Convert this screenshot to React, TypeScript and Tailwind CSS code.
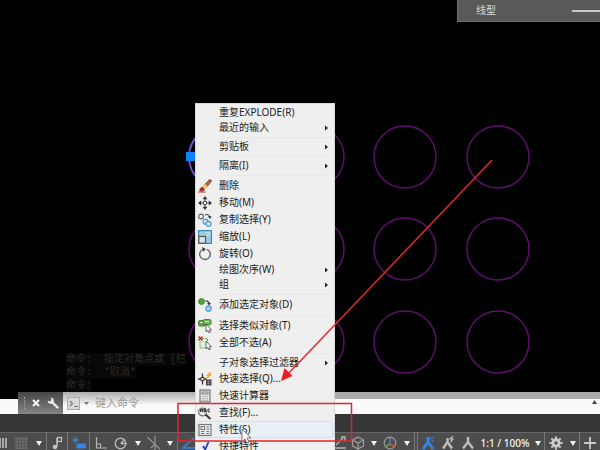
import type { ReactNode } from "react";

type Item = {
  label: string;
  icon?: ReactNode;
  submenu?: boolean;
  checked?: boolean;
  active?: boolean;
};

const columns = [220, 313, 405, 498];
const rows = [157, 249, 342];

function EraseIcon() {
  return (
    <svg viewBox="0 0 14 14" className="size-3.5">
      <path d="M0 13h8" stroke="#c0392b" strokeWidth="1" />
      <path d="M6 6 11 1q1-1 2 0t0 2L8.500 8.500z" fill="#a8683c" stroke="#5a3a26" strokeWidth=".6" />
      <path d="M4 7.500 7 4.700 10 7.700 7 10.500z" fill="#f0c070" />
      <path d="M1.500 10 4 7.500 7 10.500 5 12.500H2.500Q.8 11.500 1.500 10z" fill="#9a3328" />
    </svg>
  );
}

function MoveIcon() {
  return (
    <svg viewBox="0 0 14 14" className="size-3.5" fill="#333">
      <path d="M7 2v10M2 7h10" stroke="#555" strokeWidth="1.100" />
      <path d="M7 0 9.400 3.200H4.600zM7 14 4.600 10.800h4.800zM0 7l3.200-2.400v4.800zM14 7l-3.200 2.400V4.600z" />
      <rect x="5.500" y="5.500" width="3" height="3" fill="#efefef" stroke="#444" strokeWidth=".8" />
    </svg>
  );
}

function CopyIcon() {
  return (
    <svg viewBox="0 0 14 14" className="size-3.5" fill="none">
      <circle cx="3" cy="3.500" r="2.400" stroke="#666" strokeWidth="1.200" />
      <path d="M7 2q4-1.500 5 2" stroke="#333" strokeWidth="1" />
      <path d="M9.800 3.200h3.700L12 6z" fill="#333" />
      <circle cx="7.500" cy="8.700" r="2.500" fill="#cfe6f7" stroke="#4a9bd6" strokeWidth="1.200" />
      <circle cx="10.500" cy="10.800" r="2.500" fill="#cfe6f7" stroke="#4a9bd6" strokeWidth="1.200" />
    </svg>
  );
}

function ScaleIcon() {
  return (
    <svg viewBox="0 0 14 14" className="size-3.5">
      <rect x=".6" y=".6" width="12.800" height="12.800" fill="#9acdea" stroke="#4688b4" strokeWidth="1.200" />
      <path d="M8 2.500h3.500V6M11.500 2.500 8 6" fill="none" stroke="#c4e3f5" strokeWidth="1" />
      <rect x=".8" y="6.500" width="6.700" height="6.700" fill="#e4e4e4" stroke="#555" strokeWidth="1.200" />
    </svg>
  );
}

function RotateIcon() {
  return (
    <svg viewBox="0 0 14 14" className="size-3.5" fill="none" stroke="#666" strokeWidth="1.400">
      <path d="M9 2.300A5.300 5.300 0 1 1 4.500 2.500" />
      <path d="M4 0 8 2 5 5z" fill="#444" stroke="none" />
    </svg>
  );
}

function AddSelectedIcon() {
  return (
    <svg viewBox="0 0 14 14" className="size-3.5">
      <circle cx="3.500" cy="3.500" r="3" fill="#55a53a" stroke="#3b7d28" strokeWidth=".8" />
      <path d="M7.500 2.800q3.500 0 3.500 3" fill="none" stroke="#333" strokeWidth="1.200" />
      <path d="M9 5h4l-2 2.600z" fill="#333" />
      <circle cx="10.500" cy="10.600" r="2.700" fill="#a9d2f1" stroke="#4a9bd6" strokeWidth="1.200" />
    </svg>
  );
}

function Pointer() {
  return <path d="M8 5v8l1.800-1.600 1.200 2.600 1.300-.6-1.200-2.500H13.500z" fill="#fff" stroke="#444" strokeWidth=".8" />;
}

function SelectSimilarIcon() {
  return (
    <svg viewBox="0 0 14 14" className="size-3.5">
      <rect x=".5" y="1.500" width="7" height="5.500" rx="1.500" fill="#5faa45" stroke="#3b7d28" strokeWidth=".9" />
      <rect x="5" y=".5" width="8" height="5.500" rx="1.500" fill="#6cb552" stroke="#3b7d28" strokeWidth=".9" />
      <path d="M2 3.500h3M7 2.500h4" stroke="#d3efc6" strokeWidth="1" />
      <Pointer />
    </svg>
  );
}

function DeselectIcon() {
  return (
    <svg viewBox="0 0 14 14" className="size-3.5">
      <path d="M4 2.500h5.500V12H2V5" fill="#dff2d8" stroke="#5faa45" strokeWidth="1" strokeDasharray="2 1" />
      <path d="m.5.500 4 4m0-4-4 4" stroke="#d8262c" strokeWidth="1.500" />
      <Pointer />
    </svg>
  );
}

function QuickSelectIcon() {
  return (
    <svg viewBox="0 0 14 14" className="size-3.5">
      <path d="M4.500 1.500v4M4.500 8.500v4M0 7h3M6 7h3" stroke="#333" strokeWidth="1.300" />
      <rect x="3" y="5.500" width="3" height="3" fill="none" stroke="#333" strokeWidth=".9" />
      <path d="m12.500 0-4 3.500h2L8 7l5.500-4.500h-2z" fill="#efa53c" stroke="#efa53c" strokeWidth=".8" />
      <rect x="8" y="7.500" width="5.500" height="6" fill="#444" />
      <path d="M9 9.500h3.500M9 11.500h3.500M10.700 8v5" stroke="#aaa" strokeWidth=".5" />
    </svg>
  );
}

function CalculatorIcon() {
  return (
    <svg viewBox="0 0 14 14" className="size-3.5" fill="none" stroke="#777">
      <rect x="2" y="1" width="10" height="12" strokeWidth="1.200" fill="#e3e6e9" />
      <rect x="4" y="3" width="6" height="2" strokeWidth=".9" />
      <path d="M4 7.500h6M4 9.500h6M4 11.300h6" strokeWidth=".9" strokeDasharray="1.400 .9" stroke="#999" />
    </svg>
  );
}

function FindIcon() {
  return (
    <svg viewBox="0 0 14 14" className="size-3.5">
      <circle cx="4.500" cy="6" r="3.900" fill="#e6e9ec" stroke="#777" strokeWidth="1.200" />
      <path d="m7.500 8.500 5 4.500" stroke="#333" strokeWidth="2" />
      <path d="M2.500 6V3.500h2V6m-2-1.200h2M6 2.800v3h1.800v-3zm0 1.500h1.800M12 3.200h-2v2.600h2" fill="none" stroke="#333" strokeWidth="1" />
    </svg>
  );
}

function PropertiesIcon() {
  return (
    <svg viewBox="0 0 14 14" className="size-3.5" fill="none" stroke="#777">
      <rect x="1" y="1.500" width="12" height="11" strokeWidth="1.200" fill="#e9eaec" />
      <rect x="3" y="3.500" width="3.500" height="3" strokeWidth="1" />
      <path d="M8.500 4H11M8.500 6.200H11M3 8.500h3.500M3 10.500h3.500M8.500 8.500H11M8.500 10.500H11" strokeWidth="1" />
    </svg>
  );
}

function CheckIcon() {
  return (
    <svg viewBox="0 0 14 14" className="size-3.5">
      <path d="m5 6 2.200 3.500L10.500 2" fill="none" stroke="#2a3cb0" strokeWidth="1.800" />
    </svg>
  );
}

const menu: Item[][] = [
  [{ label: "重复EXPLODE(R)" }, { label: "最近的输入", submenu: true }],
  [{ label: "剪贴板", submenu: true }],
  [{ label: "隔离(I)", submenu: true }],
  [
    { label: "删除", icon: <EraseIcon /> },
    { label: "移动(M)", icon: <MoveIcon /> },
    { label: "复制选择(Y)", icon: <CopyIcon /> },
    { label: "缩放(L)", icon: <ScaleIcon /> },
    { label: "旋转(O)", icon: <RotateIcon /> },
    { label: "绘图次序(W)", submenu: true },
    { label: "组", submenu: true },
  ],
  [{ label: "添加选定对象(D)", icon: <AddSelectedIcon /> }],
  [
    { label: "选择类似对象(T)", icon: <SelectSimilarIcon /> },
    { label: "全部不选(A)", icon: <DeselectIcon /> },
  ],
  [
    { label: "子对象选择过滤器", submenu: true },
    { label: "快速选择(Q)...", icon: <QuickSelectIcon /> },
    { label: "快速计算器", icon: <CalculatorIcon /> },
    { label: "查找(F)...", icon: <FindIcon /> },
    { label: "特性(S)", icon: <PropertiesIcon />, active: true },
    { label: "快捷特性", icon: <CheckIcon />, checked: true },
  ],
];

function MenuItem({ item }: { item: Item }) {
  return (
    <button
      role={item.checked ? "menuitemcheckbox" : "menuitem"}
      aria-checked={item.checked}
      className={`flex w-full items-center pl-px pr-1 text-left ${item.icon ? "h-[17px]" : "h-[15px]"} ${
        item.active ? "rounded-sm bg-[#e9f0f7] ring-1 ring-inset ring-[#d0deed]" : ""
      }`}
    >
      <span className="w-[21px] shrink-0">{item.icon}</span>
      <span className="flex-1 whitespace-nowrap">{item.label}</span>
      {item.submenu && (
        <svg viewBox="0 0 4 6" className="h-1.5 w-1">
          <path d="M0 .5 3 3 0 5.500z" fill="#222" />
        </svg>
      )}
    </button>
  );
}

function ContextMenu() {
  return (
    <div
      role="menu"
      className="absolute left-[195px] top-[103px] w-[140px] border border-[#d8d8d8] bg-[#efefef] p-px text-[10px] text-[#222]"
    >
      {menu.map((group, i) => (
        <div key={i}>
          {i > 0 && (
            <div className="flex h-1 items-center pl-6">
              <div className="h-px w-full bg-[#e8e8e8]" />
            </div>
          )}
          {group.map((item) => (
            <MenuItem key={item.label} item={item} />
          ))}
        </div>
      ))}
    </div>
  );
}

function Drawing() {
  return (
    <svg className="absolute inset-0 h-full w-full" fill="none">
      {rows.map((cy) =>
        columns.map((cx) => {
          const selected = cx === 220 && cy === 157;
          return (
            <circle key={`${cx}-${cy}`} cx={cx} cy={cy} r="31" stroke={selected ? "#6a50c8" : "#5e0f6b"} strokeWidth={selected ? 2 : 1.5} />
          );
        })
      )}
      <rect x="186" y="152" width="9" height="9" fill="#0a84ff" />
    </svg>
  );
}

function Tool({ label, width, children }: { label: string; width: string; children: ReactNode }) {
  return (
    <button aria-label={label} className={`flex h-3.5 shrink-0 items-center justify-center ${width}`}>
      {children}
    </button>
  );
}

function Caret() {
  return (
    <svg viewBox="0 0 6 5" className="h-[5px] w-1.5">
      <path d="M0 0h6L3 5z" fill="#eee" />
    </svg>
  );
}

function Glyph({ children, color = "#b5b5b5" }: { children: ReactNode; color?: string }) {
  return (
    <svg viewBox="0 0 14 14" className="size-3.5 shrink-0" fill="none" stroke={color} strokeWidth="1.200">
      {children}
    </svg>
  );
}

function Rule() {
  return <div className="-mt-1 h-[18px] w-px shrink-0 bg-[#777]" />;
}

function StatusBar() {
  return (
    <div className="flex h-[18px] shrink-0 items-start border-t border-[#666] bg-[#4d4d4d] pt-[3px]">
      <Tool label="模型" width="w-3">
        <Glyph>
          <path d="M1 2v10M4 2v10M7 2v10" strokeWidth="1.800" />
        </Glyph>
      </Tool>
      <Tool label="栅格" width="w-5">
        <Glyph color="#858585">
          <path d="M2 1v12M5 1v12M8 1v12M11 1v12M0 3h13M0 6h13M0 9h13M0 12h13" strokeWidth=".9" strokeDasharray="1.500 .7" />
        </Glyph>
      </Tool>
      <Tool label="捕捉设置" width="w-3.5">
        <Caret />
      </Tool>
      <Rule />
      <Tool label="推断约束" width="w-5">
        <Glyph color="#c4c4c4">
          <path d="M7 11V2" strokeWidth="1.500" />
          <circle cx="5" cy="11" r="1.600" fill="#c4c4c4" />
          <rect x="7.500" y="1.500" width="4" height="4" />
        </Glyph>
      </Tool>
      <Rule />
      <Tool label="动态输入" width="w-[21px]">
        <Glyph color="#3188e8">
          <path d="M3.500 1v6M.5 4h6" strokeWidth="1.600" />
          <rect x="5" y="8" width="8.500" height="4" rx="1" fill="#3188e8" />
        </Glyph>
      </Tool>
      <Rule />
      <Tool label="正交" width="w-[21px]">
        <Glyph>
          <path d="M2.500 1v11H13M2.500 8h4v4" />
        </Glyph>
      </Tool>
      <Tool label="极轴" width="w-5">
        <Glyph>
          <circle cx="6.500" cy="7.500" r="5.200" strokeWidth="1.500" />
          <path d="M6.500 7.500H13M6.500 7.500l4.500-4M8.500 6v3" />
        </Glyph>
      </Tool>
      <Tool label="极轴设置" width="w-3.5">
        <Caret />
      </Tool>
      <Tool label="等轴测草图" width="w-[18px]">
        <Glyph color="#959595">
          <path d="m0 1 13 12M8 0v14M8 8l-4 4" />
        </Glyph>
      </Tool>
      <Tool label="草图设置" width="w-3.5">
        <Caret />
      </Tool>
      <Rule />
      <Tool label="对象捕捉追踪" width="w-5">
        <Glyph color="#3188e8">
          <path d="M13 2 2 12h12" strokeWidth="1.500" />
        </Glyph>
      </Tool>

      <div className="ml-auto flex items-start">
        <Tool label="选择循环" width="w-4">
          <Glyph>
            <path d="M1 12h12M3 9l7-7M8 1h4v4" strokeWidth="1.400" />
          </Glyph>
        </Tool>
        <Tool label="三维对象捕捉" width="w-5">
          <Glyph color="#a0a0a0">
            <path d="m7 1 5.500 3v6L7 13l-5.500-3V4zM1.500 4 7 7l5.500-3M7 7v6" />
          </Glyph>
        </Tool>
        <Tool label="三维捕捉设置" width="w-3">
          <Caret />
        </Tool>
        <Tool label="动态 UCS" width="w-5">
          <Glyph color="#999">
            <circle cx="7" cy="7" r="5.800" />
            <path d="M7 8V2" stroke="#4b9be0" />
            <path d="m7 8 5 3" stroke="#d05545" strokeWidth="1.500" />
            <path d="m7 8-5 3" stroke="#5ba84a" strokeWidth="1.500" />
          </Glyph>
        </Tool>
        <Tool label="UCS 设置" width="w-3.5">
          <Caret />
        </Tool>
        <div className="flex gap-0.5">
          <Rule />
          <Rule />
        </div>
        <Tool label="注释可见性" width="w-5">
          <Glyph color="#2f86ea">
            <path d="M7 1v6M7 6l-5 7M7 6l5 7" strokeWidth="3" />
            <path d="m9 3 4-2M10 5h3" />
          </Glyph>
        </Tool>
        <Tool label="自动缩放" width="w-5">
          <Glyph color="#bdbdbd">
            <path d="M6.500 2v5M6.500 6 2 12.500M6.500 6l4.500 6.500" strokeWidth="2.400" />
            <path d="m12 0-3 3h3L9.500 6" />
          </Glyph>
        </Tool>
        <Tool label="注释比例" width="w-5">
          <Glyph color="#bdbdbd">
            <path d="M7 1v6M7 6l-5 6.500M7 6l5 6.500" strokeWidth="2.400" />
          </Glyph>
        </Tool>
        <button className="flex h-3.5 w-[66px] items-center justify-center gap-1.5 whitespace-nowrap text-[10px] font-medium text-[#f4f4f4]">
          1:1 / 100%
          <Caret />
        </button>
        <Rule />
        <Tool label="切换工作空间" width="w-[22px]">
          <Glyph color="#cfcfcf">
            <circle cx="7" cy="7" r="3.200" strokeWidth="3" />
            <path d="M7 .5v2M7 11.500v2M.5 7h2M11.500 7h2M2.400 2.400l1.400 1.400M10.200 10.200l1.400 1.400M2.400 11.600l1.400-1.400M10.200 3.800l1.400-1.400" strokeWidth="2" />
          </Glyph>
        </Tool>
        <Tool label="工作空间设置" width="w-3">
          <Caret />
        </Tool>
        <Rule />
        <Tool label="注释监视器" width="w-5">
          <Glyph color="#c9c9c9">
            <path d="M7 1v12M1 7h12" strokeWidth="1.800" />
          </Glyph>
        </Tool>
      </div>
    </div>
  );
}

function CommandLine() {
  return (
    <div className="flex h-[22px] shrink-0 flex-col bg-gradient-to-b from-[#acacac] from-[32%] to-[#fafafa] to-[32%]">
      <div className="flex h-full items-stretch">
        {/* canvas shows through left of the grip */}
        <div className="w-[18px] bg-gradient-to-b from-black from-[32%] to-[#fafafa] to-[32%]" />
        <div className="flex w-[45px] items-center justify-between bg-gradient-to-b from-[#474747] to-[#858585] pl-1.5 pr-1">
          <div className="h-3 border-l border-dotted border-[#aaa]" />
          <button aria-label="关闭">
            <svg viewBox="0 0 8 8" className="size-2">
              <path d="m1 1 6 6m0-6L1 7" stroke="#fff" strokeWidth="1.800" />
            </svg>
          </button>
          <button aria-label="自定义">
            <svg viewBox="0 0 12 12" className="size-3">
              <path d="m4.500 4.500 6 6" stroke="#eee" strokeWidth="2.400" strokeLinecap="round" />
              <path d="M3.500.800A3 3 0 1 1 .8 3.500L3 4.800 4.800 3z" fill="#eee" />
            </svg>
          </button>
        </div>
        <label className="flex flex-1 items-center gap-1 bg-gradient-to-b from-[#acacac] to-[#fafafa] to-60% pl-1">
          <svg viewBox="0 0 13 13" className="size-[13px]" fill="none">
            <rect x=".5" y=".5" width="12" height="12" fill="#d8d8d8" stroke="#aaa" />
            <path d="m3 4 2.500 2.500L3 9M7 9.500h4" stroke="#777" strokeWidth="1.200" />
          </svg>
          <svg viewBox="0 0 5 3" className="h-[3px] w-[5px]">
            <path d="M0 0h5L2.500 3z" fill="#777" />
          </svg>
          <input
            aria-label="命令"
            placeholder="键入命令"
            className="ml-0.5 w-24 bg-transparent text-[11px] leading-4 outline-none placeholder:text-[#999]"
          />
        </label>
        <div className="flex flex-[2] justify-end pr-[3px] pt-2">
          <svg viewBox="0 0 5 4" className="h-1 w-[5px]">
            <path d="M0 4h5L2.500 0z" fill="#444" />
          </svg>
        </div>
      </div>
    </div>
  );
}

function Annotations() {
  return (
    <svg className="pointer-events-none absolute inset-0 h-full w-full" fill="none">
      <path d="M492 160 287 375" stroke="#e02a2c" strokeWidth="1.500" />
      <path d="m281 381 3.500-13 8 8z" fill="#ea1c22" />
      <rect x="178" y="403.500" width="173.500" height="37.500" stroke="#e0262c" strokeWidth="1.500" />
      <path d="M242 429v13l3-3 2 4 2-1-2-4h4z" fill="#fafafa" stroke="#666" strokeWidth=".9" />
    </svg>
  );
}

export default function App() {
  return (
    <div className="relative flex h-screen flex-col overflow-hidden bg-black font-['Noto_Sans','Noto_Sans_CJK_SC',sans-serif]">
      <main className="relative flex min-h-0 flex-1 flex-col justify-between">
        <Drawing />
        <div className="relative ml-auto flex h-[22px] w-[143px] items-center justify-between border-b border-l border-[#6d6d6d] bg-[#595959] pl-[18px] text-[10px] text-[#dcdcdc]">
          <span>线型</span>
          <div className="h-0.5 w-7 bg-[#c8c8c8]" />
        </div>
        <div className="relative ml-[66px] flex flex-col items-start whitespace-pre font-['Liberation_Mono','Noto_Sans_CJK_SC',monospace] text-[10px] leading-[13px] text-[#2a2a2a]">
          <p className="bg-[#080808]">命令:  指定对角点或 [栏</p>
          <p className="bg-[#080808]">命令:  *取消*</p>
          <p className="bg-[#080808]">命令:</p>
        </div>
      </main>
      <CommandLine />
      <div className="h-[18px] shrink-0 bg-[#363636]" />
      <StatusBar />
      <ContextMenu />
      <Annotations />
    </div>
  );
}
